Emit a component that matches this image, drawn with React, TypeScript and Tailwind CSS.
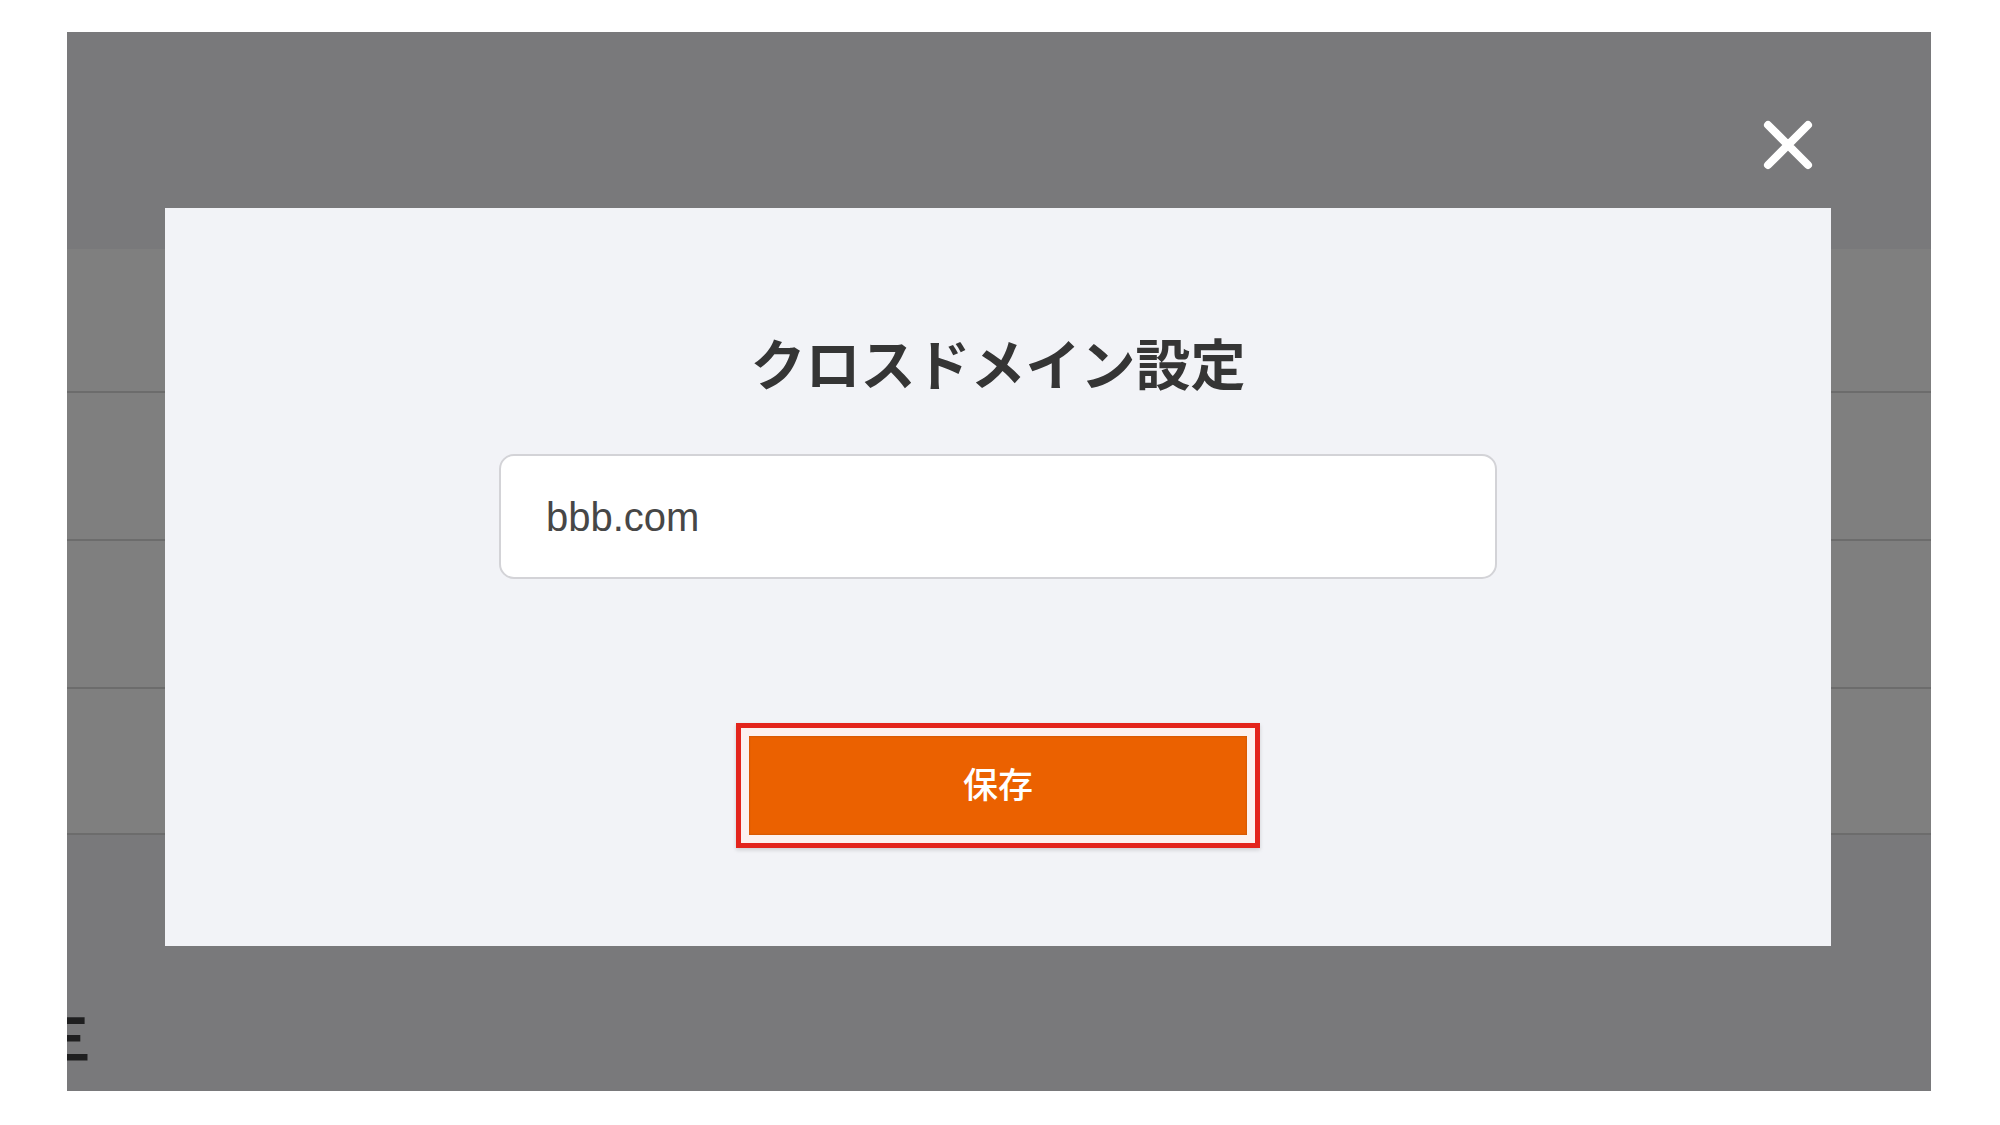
import React from "react";

export default function App() {
  return (
    <div className="w-[2000px] h-[1125px] bg-white pt-[32px] pl-[67px] overflow-hidden">
      <div className="relative w-[1864px] h-[1059px] overflow-hidden flex flex-col bg-[#7a7a7c]">
        {/* underlying page, dimmed */}
        <div className="h-[217px] bg-[#79797b] shrink-0" />
        <div className="h-[144px] bg-[#7f7f7f] border-b-2 border-[#6c6c6c] shrink-0" />
        <div className="h-[148px] bg-[#7f7f7f] border-b-2 border-[#6c6c6c] shrink-0" />
        <div className="h-[148px] bg-[#7f7f7f] border-b-2 border-[#6c6c6c] shrink-0" />
        <div className="h-[146px] bg-[#7f7f7f] border-b-2 border-[#6c6c6c] shrink-0" />
        <div className="flex-1 bg-[#79797b] pt-[174px]">
          <div
            className="-ml-[30px] text-[54px] leading-none font-bold text-[#1f1f20]"
            style={{ fontFamily: '"Noto Sans CJK JP", sans-serif' }}
          >
            三
          </div>
        </div>

        {/* close button */}
        <button className="absolute left-[1696px] top-[88px] w-[50px] h-[50px] flex items-center justify-center">
          <svg width="50" height="50" viewBox="0 0 50 50" fill="none">
            <path d="M5 5 L45 45 M45 5 L5 45" stroke="#ffffff" strokeWidth="8" strokeLinecap="round" />
          </svg>
        </button>

        {/* modal */}
        <div className="absolute left-[98px] top-[176px] w-[1666px] h-[738px] bg-[#f2f3f7] flex flex-col items-center pt-[126px]">
          <h1
            className="text-[55px] leading-none font-bold text-[#353535]"
            style={{ fontFamily: '"Noto Sans CJK JP", sans-serif' }}
          >
            クロスドメイン設定
          </h1>
          <div className="mt-[65px] w-[998px] h-[125px] bg-white border-2 border-[#d3d3d7] rounded-[15px] flex items-center pl-[45px]">
            <span
              className="text-[40px] text-[#474747]"
              style={{ fontFamily: '"Liberation Sans", Arial, sans-serif' }}
            >
              bbb.com
            </span>
          </div>
          <div className="mt-[144px] w-[524px] h-[125px] border-[5px] border-[#e3241c] bg-[#fcf1ef] p-[8px] shadow-[0_2px_4px_rgba(0,0,0,0.15)]">
            <div className="w-full h-full bg-[#eb6100] flex items-center justify-center pb-[6px] shadow-[inset_0_0_2px_rgba(120,60,20,0.5)]">
              <span
                className="text-[35px] leading-none font-medium text-white"
                style={{ fontFamily: '"Noto Sans CJK JP", sans-serif' }}
              >
                保存
              </span>
            </div>
          </div>
        </div>
      </div>
    </div>
  );
}
